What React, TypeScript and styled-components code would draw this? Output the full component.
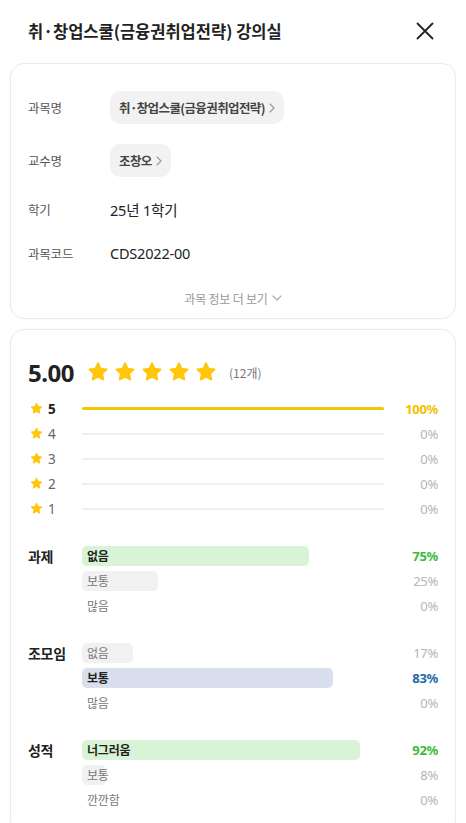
import React from "react";
import styled, { createGlobalStyle } from "styled-components";

const GlobalStyle = createGlobalStyle`
  html, body { margin: 0; padding: 0; background: #ffffff; }
  body {
    font-family: "Noto Sans", "Noto Sans CJK KR", sans-serif;
    color: #222;
    -webkit-font-smoothing: antialiased;
  }
  * { box-sizing: border-box; }
`;

const Page = styled.div`
  width: 466px;
  display: flex;
  flex-direction: column;
  padding-bottom: 20px;
`;

const Header = styled.header`
  height: 63px;
  display: flex;
  align-items: center;
  justify-content: space-between;
  padding: 0 31px 1px 28px;
`;

const Title = styled.h1`
  margin: 0;
  font-size: 16.5px;
  font-weight: 700;
  color: #222;
  letter-spacing: 0;
  font-family: "Noto Sans CJK KR", sans-serif;
`;

const CloseButton = styled.button`
  border: 0;
  background: none;
  padding: 0;
  width: 20px;
  height: 20px;
  display: flex;
  align-items: center;
  justify-content: center;
`;

const Card = styled.section`
  margin: 0 10px 10px;
  border: 1px solid #ebebeb;
  border-radius: 14px;
  background: #fff;
  box-shadow: 0 0 2px rgba(0, 0, 0, 0.03);
`;

const InfoCard = styled(Card)`
  padding: 27px 17px 11px;
  display: flex;
  flex-direction: column;
`;

const InfoList = styled.div`
  display: flex;
  flex-direction: column;
  gap: 20px;
`;

const InfoRow = styled.div<{ $tall?: boolean }>`
  display: flex;
  align-items: center;
  min-height: ${(p) => (p.$tall ? "33px" : "24px")};
`;

const InfoLabel = styled.div`
  width: 82px;
  flex-shrink: 0;
  font-size: 12.5px;
  color: #555;
  font-family: "Noto Sans CJK KR", sans-serif;
  letter-spacing: -0.2px;
`;

const Pill = styled.button`
  display: inline-flex;
  align-items: center;
  gap: 4px;
  height: 33px;
  padding: 0 9px 0 9px;
  border: 0;
  border-radius: 10px;
  background: #f2f2f2;
  font-family: "Noto Sans CJK KR", sans-serif;
  font-size: 12.5px;
  font-weight: 700;
  color: #444;
  letter-spacing: -0.6px;
`;

const InfoValue = styled.div`
  font-size: 14.5px;
  color: #222;
  font-family: "Noto Sans", "Noto Sans CJK KR", sans-serif;
  letter-spacing: -0.2px;
`;

const MoreButton = styled.button`
  margin-top: 24px;
  align-self: center;
  display: inline-flex;
  align-items: center;
  gap: 4px;
  border: 0;
  background: none;
  padding: 0;
  height: 18px;
  font-family: "Noto Sans CJK KR", sans-serif;
  font-size: 12px;
  color: #999;
  letter-spacing: -0.2px;
`;

const RatingCard = styled(Card)`
  padding: 25px 17px 20px;
  display: flex;
  flex-direction: column;
`;

const Summary = styled.div`
  display: flex;
  align-items: center;
  height: 34px;
`;

const Score = styled.div`
  font-size: 24px;
  font-weight: 700;
  color: #222;
  width: 59px;
  letter-spacing: -0.5px;
`;

const Stars = styled.div`
  display: flex;
  gap: 5px;
  margin-right: 12px;
`;

const Count = styled.span`
  font-size: 12px;
  color: #777;
  font-family: "Noto Sans CJK KR", sans-serif;
`;

const StarRows = styled.div`
  margin-top: 7px;
  display: flex;
  flex-direction: column;
`;

const Row = styled.div`
  display: grid;
  grid-template-columns: 54px 302px 54px;
  align-items: center;
  height: 25px;
`;

const StarLabel = styled.div<{ $active: boolean }>`
  display: flex;
  align-items: center;
  gap: 5px;
  padding-left: 2px;
  font-size: 13.5px;
  font-weight: ${(p) => (p.$active ? 700 : 400)};
  color: ${(p) => (p.$active ? "#222" : "#666")};
`;

const LineTrack = styled.div`
  position: relative;
  height: 3px;
  display: flex;
  align-items: center;
`;

const LineBase = styled.div`
  width: 100%;
  height: 2px;
  background: #efefef;
  border-radius: 1px;
`;

const LineFill = styled.div`
  position: absolute;
  left: 0;
  top: 0;
  height: 3px;
  border-radius: 2px;
  background: #f7c600;
`;

const Percent = styled.div<{ $color?: string }>`
  text-align: right;
  font-size: 13px;
  font-weight: ${(p) => (p.$color ? 700 : 400)};
  color: ${(p) => p.$color || "#b5b5b5"};
  letter-spacing: -0.3px;
`;

const Group = styled.div`
  margin-top: 22px;
  display: flex;
  flex-direction: column;
`;

const GroupLabel = styled.div`
  font-size: 14px;
  font-weight: 700;
  color: #222;
  font-family: "Noto Sans CJK KR", sans-serif;
  letter-spacing: -0.3px;
`;

const OptionTrack = styled.div`
  position: relative;
  height: 20px;
  display: flex;
  align-items: center;
`;

const OptionFill = styled.div<{ $bg: string }>`
  position: absolute;
  left: 0;
  top: 0;
  bottom: 0;
  border-radius: 5px;
  background: ${(p) => p.$bg};
`;

const OptionText = styled.span<{ $active: boolean }>`
  position: relative;
  padding-left: 5px;
  font-family: "Noto Sans CJK KR", sans-serif;
  font-size: 12px;
  font-weight: ${(p) => (p.$active ? 700 : 400)};
  color: ${(p) => (p.$active ? "#222" : "#777")};
  letter-spacing: -0.2px;
`;

const Chevron = ({ dir }: { dir: "right" | "down" }) =>
  dir === "right" ? (
    <svg width="6" height="10" viewBox="0 0 6 10" fill="none">
      <path d="M1 1l4 4-4 4" stroke="#999" strokeWidth="1.1" strokeLinecap="round" strokeLinejoin="round" />
    </svg>
  ) : (
    <svg width="10" height="6" viewBox="0 0 10 6" fill="none">
      <path d="M1 1l4 4 4-4" stroke="#aaa" strokeWidth="1.1" strokeLinecap="round" strokeLinejoin="round" />
    </svg>
  );

const Star = ({ size }: { size: number }) => (
  <svg width={size} height={size} viewBox="0 0 24 24">
    <path
      d="M12 2.6l2.75 5.9 6.45.78-4.75 4.45 1.2 6.4L12 17.05 6.35 20.13l1.2-6.4L2.8 9.28l6.45-.78z"
      fill="#ffc60b"
      stroke="#ffc60b"
      strokeWidth="2.2"
      strokeLinejoin="round"
    />
  </svg>
);

type Option = { label: string; pct: number };
type Category = { name: string; options: Option[]; bg: string; color: string };

const starData = [
  { n: 5, pct: 100 },
  { n: 4, pct: 0 },
  { n: 3, pct: 0 },
  { n: 2, pct: 0 },
  { n: 1, pct: 0 },
];

const categories: Category[] = [
  {
    name: "과제",
    bg: "#d9f3d6",
    color: "#3cb93c",
    options: [
      { label: "없음", pct: 75 },
      { label: "보통", pct: 25 },
      { label: "많음", pct: 0 },
    ],
  },
  {
    name: "조모임",
    bg: "#d9dfec",
    color: "#1f6aa5",
    options: [
      { label: "없음", pct: 17 },
      { label: "보통", pct: 83 },
      { label: "많음", pct: 0 },
    ],
  },
  {
    name: "성적",
    bg: "#d9f3d6",
    color: "#3cb93c",
    options: [
      { label: "너그러움", pct: 92 },
      { label: "보통", pct: 8 },
      { label: "깐깐함", pct: 0 },
    ],
  },
];

export default function App() {
  return (
    <Page>
      <GlobalStyle />
      <Header>
        <Title>취·창업스쿨(금융권취업전략) 강의실</Title>
        <CloseButton aria-label="닫기">
          <svg width="18" height="18" viewBox="0 0 18 18" fill="none">
            <path d="M1.5 1.5l15 15M16.5 1.5l-15 15" stroke="#222" strokeWidth="1.8" strokeLinecap="round" />
          </svg>
        </CloseButton>
      </Header>

      <InfoCard>
        <InfoList>
          <InfoRow $tall>
            <InfoLabel>과목명</InfoLabel>
            <Pill>
              취·창업스쿨(금융권취업전략) <Chevron dir="right" />
            </Pill>
          </InfoRow>
          <InfoRow $tall>
            <InfoLabel>교수명</InfoLabel>
            <Pill>
              조창오 <Chevron dir="right" />
            </Pill>
          </InfoRow>
          <InfoRow>
            <InfoLabel>학기</InfoLabel>
            <InfoValue>25년 1학기</InfoValue>
          </InfoRow>
          <InfoRow>
            <InfoLabel>과목코드</InfoLabel>
            <InfoValue>CDS2022-00</InfoValue>
          </InfoRow>
        </InfoList>
        <MoreButton>
          과목 정보 더 보기 <Chevron dir="down" />
        </MoreButton>
      </InfoCard>

      <RatingCard>
        <Summary>
          <Score>5.00</Score>
          <Stars>
            {[0, 1, 2, 3, 4].map((i) => (
              <Star key={i} size={22} />
            ))}
          </Stars>
          <Count>(12개)</Count>
        </Summary>

        <StarRows>
          {starData.map((s) => {
            const active = s.pct > 0;
            return (
              <Row key={s.n}>
                <StarLabel $active={active}>
                  <Star size={13} />
                  {s.n}
                </StarLabel>
                <LineTrack>
                  <LineBase />
                  {active && <LineFill style={{ width: `${s.pct}%` }} />}
                </LineTrack>
                <Percent $color={active ? "#f5c000" : undefined}>{s.pct}%</Percent>
              </Row>
            );
          })}
        </StarRows>

        {categories.map((c) => {
          const max = Math.max(...c.options.map((o) => o.pct));
          return (
            <Group key={c.name}>
              {c.options.map((o, i) => {
                const active = o.pct === max;
                return (
                  <Row key={o.label}>
                    {i === 0 ? <GroupLabel>{c.name}</GroupLabel> : <span />}
                    <OptionTrack>
                      {o.pct > 0 && (
                        <OptionFill $bg={active ? c.bg : "#f1f1f1"} style={{ width: `${o.pct}%` }} />
                      )}
                      <OptionText $active={active}>{o.label}</OptionText>
                    </OptionTrack>
                    <Percent $color={active ? c.color : undefined}>{o.pct}%</Percent>
                  </Row>
                );
              })}
            </Group>
          );
        })}
      </RatingCard>
    </Page>
  );
}
